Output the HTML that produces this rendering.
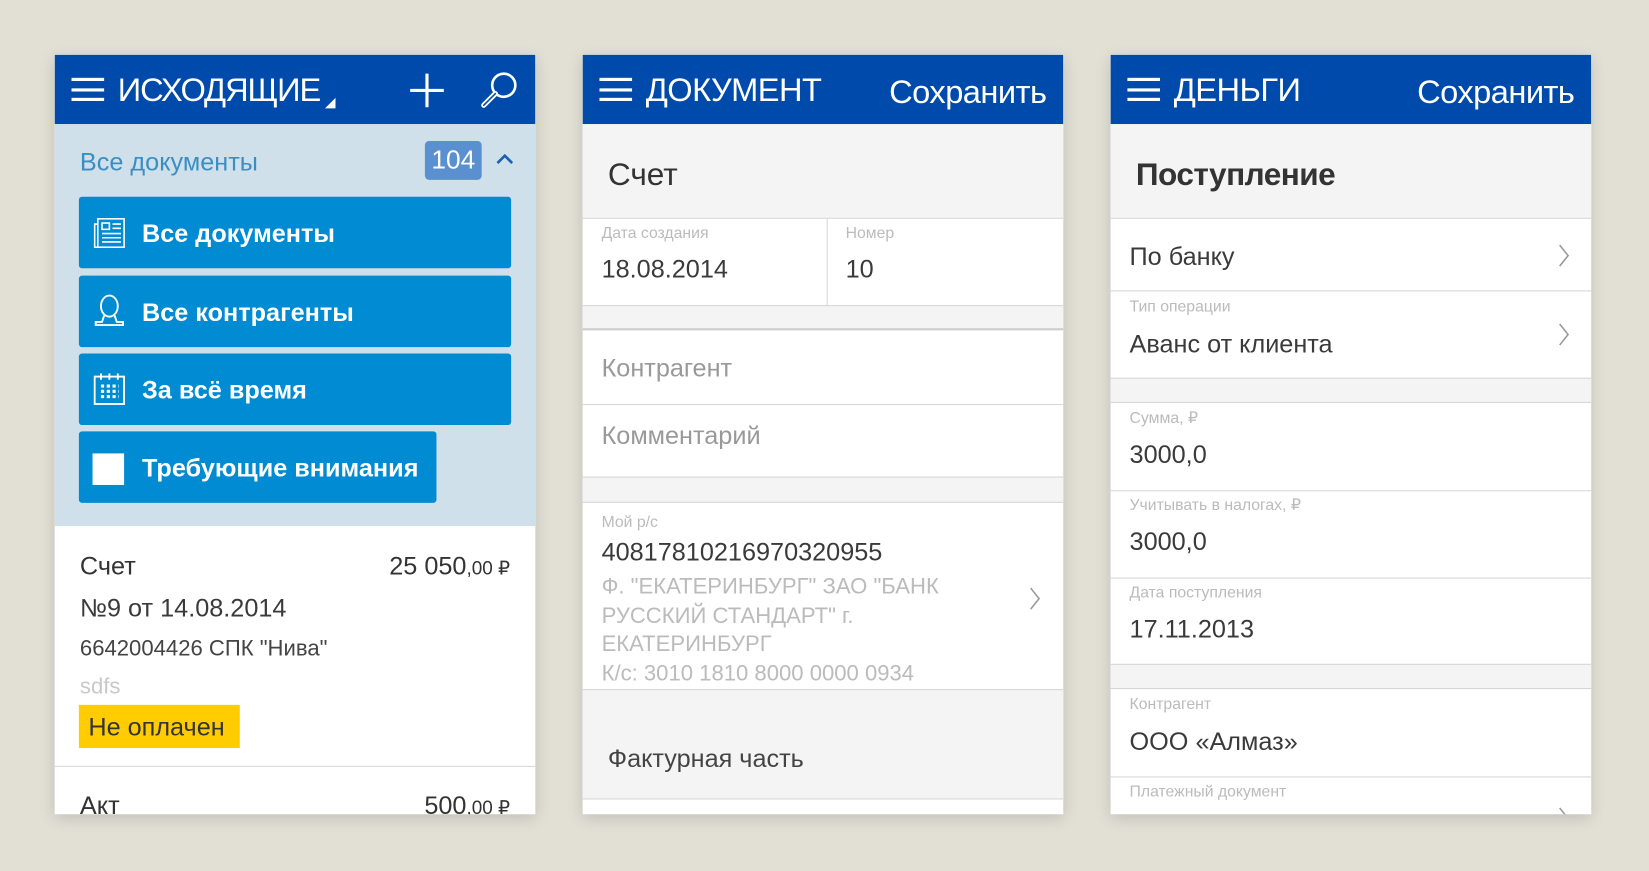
<!DOCTYPE html>
<html><head><meta charset="utf-8"><style>
*{margin:0;padding:0;box-sizing:border-box}
html,body{width:1649px;height:871px;overflow:hidden;background:#e2e0d5}
#w{position:absolute;left:0;top:0;width:1568px;height:828px;transform:scale(1.0517,1.052);transform-origin:0 0;font-family:"Liberation Sans","Noto Sans CJK SC",sans-serif}
.p{position:absolute;top:52px;width:457px;height:722px;background:#fff;overflow:hidden;box-shadow:0 4px 14px rgba(0,0,0,.15)}
.h{position:absolute;left:0;top:0;width:457px;height:66px;background:#004aab;color:#fff}
.a{position:absolute;white-space:nowrap;line-height:30px;margin-top:2px}
.g{position:absolute;left:0;width:457px;background:#f4f4f4}
.l{position:absolute;left:0;width:457px;height:1px;background:#d6d6d6}
.lab{font-size:15px;color:#bbb}
.val{font-size:24px;color:#3a3a3a}
.btn{position:absolute;left:23px;width:411px;height:68px;background:#008bd2;border-radius:3px;color:#fff;font-size:24px;font-weight:bold}
.btn .a{left:60px;top:19px}
.ham{position:absolute;left:16px;top:22px;width:31px;height:22px;border-top:3px solid #fff;border-bottom:3px solid #fff}
.ham:after{content:"";position:absolute;left:0;top:7px;width:31px;height:3px;background:#fff}
.h .a{letter-spacing:-0.5px}
</style></head><body><div id="w">

<!-- Panel 1 -->
<div class="p" style="left:52px">
 <div class="h"><div class="ham"></div>
  <div class="a" style="left:60px;top:17px;font-size:31px;letter-spacing:-1px">ИСХОДЯЩИЕ</div>
  <svg style="position:absolute;left:256px;top:40px" width="12" height="12"><path d="M11 1V11H1Z" fill="#fff"/></svg>
  <svg style="position:absolute;left:336px;top:16px" width="36" height="36"><path d="M18 2V34M2 18H34" stroke="#fff" stroke-width="3"/></svg>
  <svg style="position:absolute;left:403px;top:14px" width="40" height="40"><circle cx="24" cy="15" r="11" fill="none" stroke="#fff" stroke-width="2.5"/><path d="M16 23L5 34" stroke="#fff" stroke-width="5" stroke-linecap="round"/><path d="M16 23L5 34" stroke="#004aab" stroke-width="1.5" stroke-linecap="round"/></svg>
 </div>
 <div style="position:absolute;left:0;top:66px;width:457px;height:382px;background:#cfe0ea">
  <div class="a" style="left:24px;top:20px;font-size:24px;color:#3b8ec4">Все документы</div>
  <div style="position:absolute;left:352px;top:16px;width:54px;height:37px;background:#5a8fd0;border-radius:4px;color:#fff;font-size:25px;text-align:center;line-height:37px">104</div>
  <svg style="position:absolute;left:419px;top:26px" width="18" height="14"><path d="M2 11L9 4L16 11" fill="none" stroke="#1a5fb0" stroke-width="2.5"/></svg>
  <div class="btn" style="top:69px"><svg style="position:absolute;left:14px;top:20px" width="30" height="30"><rect x="4" y="1" width="25" height="27" fill="none" stroke="#fff" stroke-width="1.5"/><path d="M4 6H1V28H4" fill="none" stroke="#fff" stroke-width="1.5"/><rect x="8" y="5" width="7" height="6" fill="none" stroke="#fff" stroke-width="1.5"/><path d="M18 6H26M18 10H26M8 15H26M8 19H26M8 23H26" stroke="#fff" stroke-width="1.5"/></svg><div class="a">Все документы</div></div>
  <div class="btn" style="top:144px"><svg style="position:absolute;left:14px;top:18px" width="30" height="32"><ellipse cx="15" cy="11" rx="8" ry="10" fill="none" stroke="#fff" stroke-width="1.8"/><path d="M10 20L8 26H2V29H28V26H22L20 20" fill="none" stroke="#fff" stroke-width="1.8"/></svg><div class="a">Все контрагенты</div></div>
  <div class="btn" style="top:218px"><svg style="position:absolute;left:14px;top:18px" width="30" height="32"><rect x="1" y="4" width="28" height="26" fill="none" stroke="#fff" stroke-width="1.8"/><path d="M7 1V7M15 1V7M23 1V7" stroke="#fff" stroke-width="1.8"/><path d="M7 13H24M7 18H24M7 23H24" stroke="#fff" stroke-width="3" stroke-dasharray="3 2.5"/></svg><div class="a">За всё время</div></div>
  <div class="btn" style="top:292px;width:340px"><div style="position:absolute;left:13px;top:21px;width:30px;height:30px;background:#fff"></div><div class="a">Требующие внимания</div></div>
 </div>
 <div class="a" style="left:24px;top:470px;font-size:24px;color:#333">Счет</div>
 <div class="a" style="right:24px;top:470px;font-size:24px;color:#333">25 050<span style="font-size:18px">,00 ₽</span></div>
 <div class="a" style="left:24px;top:510px;font-size:24px;color:#3a3a3a">№9 от 14.08.2014</div>
 <div class="a" style="left:24px;top:548px;font-size:21px;color:#444">6642004426 СПК "Нива"</div>
 <div class="a" style="left:24px;top:584px;font-size:21px;color:#c8c8c8">sdfs</div>
 <div style="position:absolute;left:23px;top:618px;width:153px;height:41px;background:#ffcc00;color:#333;font-size:24px;line-height:43px;padding-left:9px">Не оплачен</div>
 <div class="l" style="top:676px"></div>
 <div class="a" style="left:24px;top:698px;font-size:24px;color:#333">Акт</div>
 <div class="a" style="right:24px;top:698px;font-size:24px;color:#333">500<span style="font-size:18px">,00 ₽</span></div>
</div>

<!-- Panel 2 -->
<div class="p" style="left:554px">
 <div class="h"><div class="ham"></div>
  <div class="a" style="left:60px;top:17px;font-size:31px">ДОКУМЕНТ</div>
  <div class="a" style="right:16px;top:19px;font-size:31px">Сохранить</div></div>
 <div class="g" style="top:66px;height:89px"></div>
 <div class="a" style="left:24px;top:98px;font-size:30px;color:#333">Счет</div>
 <div class="l" style="top:155px"></div>
 <div style="position:absolute;left:232px;top:156px;width:1px;height:82px;background:#d6d6d6"></div>
 <div class="a lab" style="left:18px;top:153px">Дата создания</div>
 <div class="a val" style="left:18px;top:188px">18.08.2014</div>
 <div class="a lab" style="left:250px;top:153px">Номер</div>
 <div class="a val" style="left:250px;top:188px">10</div>
 <div class="g" style="top:238px;height:24px;border-top:1px solid #d6d6d6;border-bottom:2px solid #ccc"></div>
 <div class="a" style="left:18px;top:282px;font-size:24px;color:#999">Контрагент</div>
 <div class="l" style="top:332px"></div>
 <div class="a" style="left:18px;top:346px;font-size:24px;color:#999">Комментарий</div>
 <div class="g" style="top:401px;height:25px;border-top:1px solid #d6d6d6;border-bottom:1px solid #d6d6d6"></div>
 <div class="a lab" style="left:18px;top:428px">Мой р/с</div>
 <div class="a val" style="left:18px;top:457px">40817810216970320955</div>
 <div class="a" style="left:18px;top:490px;font-size:21px;color:#bbb;line-height:27.5px">Ф. "ЕКАТЕРИНБУРГ" ЗАО "БАНК<br>РУССКИЙ СТАНДАРТ" г.<br>ЕКАТЕРИНБУРГ<br>К/с: 3010 1810 8000 0000 0934</div>
 <svg style="position:absolute;left:424px;top:505px" width="12" height="24"><path d="M2 2L10 12L2 22" fill="none" stroke="#999" stroke-width="1.5"/></svg>
 <div class="g" style="top:603px;height:105px;border-top:1px solid #d6d6d6;border-bottom:1px solid #d6d6d6"></div>
 <div class="a" style="left:24px;top:653px;font-size:24px;color:#444">Фактурная часть</div>
</div>

<!-- Panel 3 -->
<div class="p" style="left:1056px">
 <div class="h"><div class="ham"></div>
  <div class="a" style="left:60px;top:17px;font-size:31px">ДЕНЬГИ</div>
  <div class="a" style="right:16px;top:19px;font-size:31px">Сохранить</div></div>
 <div class="g" style="top:66px;height:89px"></div>
 <div class="a" style="left:24px;top:98px;font-size:30px;color:#333;font-weight:bold;letter-spacing:-0.5px">Поступление</div>
 <div class="l" style="top:155px"></div>
 <div class="a val" style="left:18px;top:176px">По банку</div>
 <svg style="position:absolute;left:425px;top:179px" width="12" height="24"><path d="M2 2L10 12L2 22" fill="none" stroke="#999" stroke-width="1.5"/></svg>
 <div class="l" style="top:224px"></div>
 <div class="a lab" style="left:18px;top:223px">Тип операции</div>
 <div class="a val" style="left:18px;top:259px">Аванс от клиента</div>
 <svg style="position:absolute;left:425px;top:254px" width="12" height="24"><path d="M2 2L10 12L2 22" fill="none" stroke="#999" stroke-width="1.5"/></svg>
 <div class="g" style="top:307px;height:24px;border-top:1px solid #d6d6d6;border-bottom:1px solid #d6d6d6"></div>
 <div class="a lab" style="left:18px;top:329px">Сумма, ₽</div>
 <div class="a val" style="left:18px;top:364px">3000,0</div>
 <div class="l" style="top:414px"></div>
 <div class="a lab" style="left:18px;top:412px">Учитывать в налогах, ₽</div>
 <div class="a val" style="left:18px;top:447px">3000,0</div>
 <div class="l" style="top:497px"></div>
 <div class="a lab" style="left:18px;top:495px">Дата поступления</div>
 <div class="a val" style="left:18px;top:530px">17.11.2013</div>
 <div class="g" style="top:579px;height:24px;border-top:1px solid #d6d6d6;border-bottom:1px solid #d6d6d6"></div>
 <div class="a lab" style="left:18px;top:601px">Контрагент</div>
 <div class="a val" style="left:18px;top:637px">ООО «Алмаз»</div>
 <div class="l" style="top:686px"></div>
 <div class="a lab" style="left:18px;top:684px">Платежный документ</div>
 <svg style="position:absolute;left:425px;top:714px" width="12" height="24"><path d="M2 2L10 12L2 22" fill="none" stroke="#999" stroke-width="1.5"/></svg>
</div>

</div></body></html>
